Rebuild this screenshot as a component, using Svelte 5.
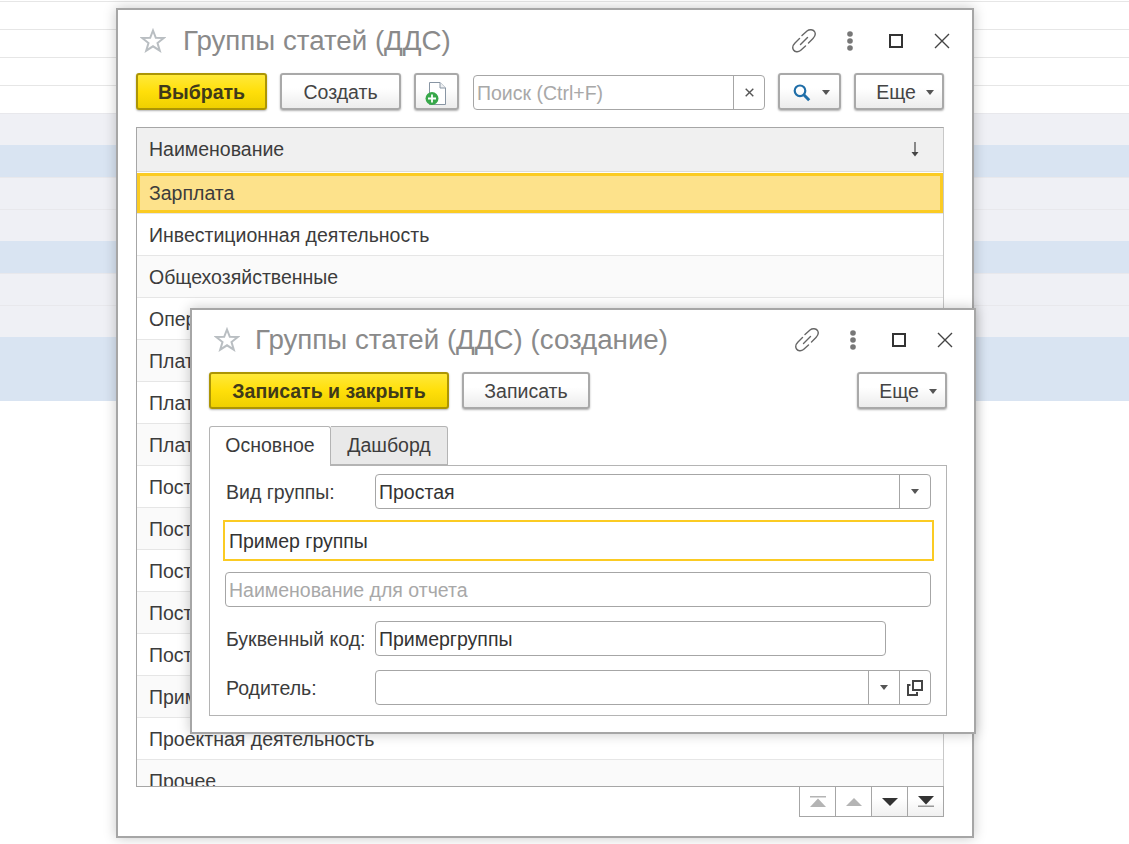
<script>
  const bgRows = [
    'plain','plain','plain','plain',
    'grey','blue','grey','grey','blue','grey','grey','blue','blue'
  ];
  const listRows = [
    'Зарплата','Инвестиционная деятельность','Общехозяйственные','Операционная деятельность',
    'Платежи поставщикам','Платежи бюджету','Платежи прочие','Поступления от клиентов',
    'Поступления прочие','Поступления кредитов','Поступления займов','Поступления процентов',
    'Пример группы','Проектная деятельность','Прочее'
  ];
</script>

{#snippet titleIcons()}
  <div class="title-icons">
    <span class="cell">
      <svg width="24" height="24" viewBox="0 0 24 24" fill="none" stroke="#666" stroke-width="1.4" stroke-linecap="round">
        <path d="M10 6.5 L15 2 C17.5 0 21 .5 22.5 2.5 C24 5 23 7.5 21 9.5 L16.5 14" />
        <path d="M13.5 17 L8.5 21.5 C6 23.5 3 23 1.5 21 C0 18.5 1 16 3 14 L7.5 9.5" />
        <path d="M8.5 15.5 L15.5 8.5" />
      </svg>
    </span>
    <span class="cell">
      <svg width="8" height="22" viewBox="0 0 8 22" fill="#777">
        <circle cx="4" cy="4" r="2.8" /><circle cx="4" cy="11" r="2.8" /><circle cx="4" cy="18" r="2.8" />
      </svg>
    </span>
    <span class="cell">
      <svg width="14" height="14" viewBox="0 0 14 14" fill="none" stroke="#333" stroke-width="2">
        <rect x="1" y="1" width="12" height="12" />
      </svg>
    </span>
    <span class="cell">
      <svg width="16" height="16" viewBox="0 0 16 16" fill="none" stroke="#444" stroke-width="1.4">
        <path d="M1 1 L15 15 M15 1 L1 15" />
      </svg>
    </span>
  </div>
{/snippet}

{#snippet star()}
  <svg class="star" width="26" height="25" viewBox="0 0 26 25" fill="#fff" stroke="#b9bec2" stroke-width="2" stroke-linejoin="miter">
    <path d="M13 2.5 L15.8 9.8 L23.8 10 L17.5 15 L19.8 22.7 L13 18.3 L6.2 22.7 L8.5 15 L2.2 10 L10.2 9.8 Z" />
  </svg>
{/snippet}

{#snippet caret()}
  <svg class="caret" width="8" height="5" viewBox="0 0 8 5" fill="#555"><path d="M0 0 H8 L4 5 Z" /></svg>
{/snippet}

<div class="desktop">
  <div class="bg">
    {#each bgRows as r}
      <div class="bg-row {r}"></div>
    {/each}
  </div>

  <section class="window main">
    <header class="titlebar">
      {@render star()}
      <h1>Группы статей (ДДС)</h1>
      {@render titleIcons()}
    </header>

    <div class="toolbar">
      <button class="btn primary w131">Выбрать</button>
      <button class="btn w121">Создать</button>
      <button class="btn w45">
        <svg width="26" height="24" viewBox="0 0 26 24">
          <path d="M5.5 1.5 H16 L21.5 7 V23.5 H5.5 Z" fill="#fff" stroke="#8895a3" stroke-width="1" />
          <path d="M16 1.5 V7 H21.5" fill="#eef0f2" stroke="#8895a3" stroke-width="1" />
          <circle cx="8" cy="17.5" r="6.5" fill="#37a84a" />
          <path d="M8 13.5 V21.5 M4 17.5 H12" stroke="#fff" stroke-width="1.8" />
        </svg>
      </button>
      <div class="search">
        <span class="search-text">Поиск (Ctrl+F)</span>
        <span class="search-x">
          <svg width="9" height="9" viewBox="0 0 9 9" fill="none" stroke="#555" stroke-width="1.4"><path d="M.7.7 L8.3 8.3 M8.3.7 L.7 8.3" /></svg>
        </span>
      </div>
      <button class="btn w63 find">
        <svg width="18" height="18" viewBox="0 0 18 18" fill="none" stroke="#1f6ea8">
          <circle cx="7" cy="6.8" r="5.3" stroke-width="2.2" />
          <path d="M10.8 10.8 L16.2 16.2" stroke-width="3" />
        </svg>
        {@render caret()}
      </button>
      <button class="btn w90 more">Еще {@render caret()}</button>
    </div>

    <div class="table">
      <div class="thead">
        <span>Наименование</span>
        <svg width="10" height="15" viewBox="0 0 10 15" fill="#444">
          <path d="M4.4 0 H5.6 V10 H4.4 Z" /><path d="M1.5 10 H8.5 L5 14.5 Z" />
        </svg>
      </div>
      {#each listRows as name, i}
        <div class="row" class:sel={i === 0} class:alt={i % 2 === 0 && i > 0}>{name}</div>
      {/each}
    </div>

    <div class="pager">
      <span class="pg off">
        <svg width="16" height="11" viewBox="0 0 16 11" fill="#b4b4b4"><path d="M0 0 H16 V1.5 H0 Z M8 2.5 L16 11 H0 Z" /></svg>
      </span>
      <span class="pg off">
        <svg width="16" height="8" viewBox="0 0 16 8" fill="#b4b4b4"><path d="M8 0 L16 8 H0 Z" /></svg>
      </span>
      <span class="pg">
        <svg width="16" height="8" viewBox="0 0 16 8" fill="#333"><path d="M0 0 H16 L8 8 Z" /></svg>
      </span>
      <span class="pg">
        <svg width="16" height="11" viewBox="0 0 16 11" fill="#333"><path d="M0 0 H16 L8 8.5 Z" /><path d="M0 9.5 H16 V11 H0 Z" fill="#999" /></svg>
      </span>
    </div>
  </section>

  <section class="window dialog">
    <header class="titlebar">
      {@render star()}
      <h1>Группы статей (ДДС) (создание)</h1>
      {@render titleIcons()}
    </header>

    <div class="toolbar">
      <button class="btn primary w240">Записать и закрыть</button>
      <button class="btn w128">Записать</button>
      <button class="btn w90 more push">Еще {@render caret()}</button>
    </div>

    <div class="tabs">
      <span class="tab active">Основное</span>
      <span class="tab">Дашборд</span>
    </div>

    <div class="panel">
      <div class="frow">
        <span class="label">Вид группы:</span>
        <div class="field grow">
          <span class="val">Простая</span>
          <span class="addon">{@render caret()}</span>
        </div>
      </div>

      <div class="focus">Пример группы</div>

      <div class="field placeholder"><span class="val">Наименование для отчета</span></div>

      <div class="frow gap14">
        <span class="label">Буквенный код:</span>
        <div class="field code"><span class="val">Примергруппы</span></div>
      </div>

      <div class="frow gap14">
        <span class="label">Родитель:</span>
        <div class="field grow">
          <span class="val"></span>
          <span class="addon">{@render caret()}</span>
          <span class="addon">
            <svg width="16" height="16" viewBox="0 0 16 16" fill="none" stroke="#444" stroke-width="2">
              <rect x="6" y="1" width="9" height="9" />
              <path d="M3.5 5 H1 V15 H10 V12" />
            </svg>
          </span>
        </div>
      </div>
    </div>
  </section>
</div>

<style>
  :global(body) {
    margin: 0;
    background: #fff;
  }

  .desktop {
    position: relative;
    width: 1129px;
    height: 844px;
    overflow: hidden;
    font-family: "Liberation Sans", Arial, sans-serif;
    font-size: 19.5px;
    color: #3c3c3c;
  }

  .bg {
    padding-top: 1px;
  }
  .bg-row {
    box-sizing: border-box;
  }
  .plain {
    height: 28px;
    border-top: 1px solid #e6e6e6;
  }
  .grey {
    height: 32px;
    background: #eff0f5;
    border-top: 1px solid #e8e8ec;
  }
  .blue {
    height: 32px;
    background: #d9e4f2;
  }

  .window {
    position: absolute;
    box-sizing: border-box;
    background: #fff;
    border: 2px solid #a6a6a6;
    box-shadow: 0 0 12px rgba(0, 0, 0, 0.22);
  }
  .main {
    left: 116px;
    top: 8px;
    width: 858px;
    height: 830px;
    padding: 0 28px 0 18px;
  }
  .dialog {
    left: 190px;
    top: 308px;
    width: 786px;
    height: 426px;
    padding: 0 27px 0 17px;
  }

  .titlebar {
    display: flex;
    box-sizing: border-box;
    align-items: center;
    height: 63px;
    padding-bottom: 2px;
    margin-right: -21px;
  }
  .dialog .titlebar {
    height: 62px;
    padding-bottom: 3px;
  }
  .star {
    margin-left: 4px;
    flex: none;
  }
  .dialog .star {
    margin-left: 5px;
  }
  h1 {
    margin: 0 0 0 17px;
    font-size: 27.7px;
    font-weight: 400;
    color: #8a8a8a;
    white-space: nowrap;
  }
  .dialog h1 {
    margin-left: 15px;
  }
  .title-icons {
    display: flex;
    margin-left: auto;
  }
  .cell {
    display: flex;
    width: 46px;
    justify-content: center;
    align-items: center;
  }

  .toolbar {
    display: flex;
    align-items: flex-start;
    gap: 13px;
    height: 38px;
    margin-bottom: 16px;
  }

  .btn {
    display: inline-flex;
    align-items: center;
    justify-content: center;
    box-sizing: border-box;
    height: 37px;
    padding: 2px 0 0;
    border: 2px solid #a9a9a9;
    border-radius: 3px;
    background: linear-gradient(#fff 40%, #ececec);
    box-shadow: 0 1px 2px rgba(0, 0, 0, 0.3);
    font: inherit;
    color: #444;
    flex: none;
  }
  .primary {
    border-color: #ac9505;
    background: linear-gradient(#ffe93a, #ffdf0a 50%, #efd000);
    font-weight: 700;
    color: #3f3a1a;
  }
  .w131 { width: 131px; }
  .w121 { width: 121px; }
  .w45 { width: 45px; }
  .w63 { width: 63px; }
  .w90 { width: 90px; }
  .w240 { width: 240px; }
  .w128 { width: 128px; }
  .find {
    gap: 11px;
    padding-left: 3px;
  }
  .more {
    gap: 10px;
    padding-left: 12px;
  }
  .push {
    margin-left: auto;
  }
  .caret {
    flex: none;
  }

  .search {
    display: flex;
    box-sizing: border-box;
    width: 292px;
    height: 35px;
    margin: 2px 0 0 1px;
    border: 1px solid #a6a6a6;
    border-radius: 4px;
    background: #fff;
    flex: none;
  }
  .search-text {
    flex: 1;
    padding-left: 3px;
    line-height: 34px;
    color: #a8a8a8;
  }
  .search-x {
    display: flex;
    width: 30px;
    justify-content: center;
    align-items: center;
    border-left: 1px solid #a6a6a6;
  }

  .table {
    box-sizing: border-box;
    height: 660px;
    overflow: hidden;
    border: 1px solid #a6a6a6;
    border-right-color: #c8c8c8;
  }
  .thead {
    display: flex;
    box-sizing: border-box;
    height: 44px;
    padding: 0 23px 0 12px;
    align-items: center;
    justify-content: space-between;
    background: #f0f0f0;
    border-bottom: 1px solid #dcdcdc;
  }
  .row {
    display: flex;
    box-sizing: border-box;
    height: 42px;
    padding: 1px 0 0 12px;
    align-items: center;
    border-bottom: 1px solid #e6e6e6;
    background: #fff;
    white-space: nowrap;
  }
  .alt {
    background: #fafafa;
  }
  .sel {
    padding-top: 0;
    border-top: 1px solid #fff;
    background: #fde28b;
    box-shadow: inset 0 0 0 3px #fbcb23;
    background-clip: padding-box;
  }

  .pager {
    display: flex;
    justify-content: flex-end;
    margin-top: -1px;
  }
  .pg {
    display: flex;
    box-sizing: border-box;
    width: 37px;
    height: 31px;
    margin-left: -1px;
    justify-content: center;
    align-items: center;
    border: 1px solid #a6a6a6;
    background: linear-gradient(#fff 40%, #f0f0f0);
  }
  .pg.off {
    background: #fff;
  }

  .tabs {
    display: flex;
    height: 39px;
    position: relative;
    z-index: 1;
  }
  .tab {
    display: flex;
    box-sizing: border-box;
    width: 117px;
    height: 39px;
    justify-content: center;
    align-items: center;
    border: 1px solid #b4b4b4;
    border-left-width: 0;
    border-radius: 0 3px 0 0;
    background: #e9e9e9;
  }
  .tab.active {
    width: 122px;
    height: 40px;
    padding-bottom: 2px;
    border-left-width: 1px;
    border-bottom: 0;
    border-radius: 3px 3px 0 0;
    background: #fff;
  }

  .panel {
    box-sizing: border-box;
    height: 251px;
    padding: 8px 15px 0;
    border: 1px solid #b4b4b4;
  }
  .frow {
    display: flex;
    align-items: center;
  }
  .gap14 {
    margin-top: 14px;
  }
  .label {
    box-sizing: border-box;
    width: 150px;
    padding: 1px 0 0 1px;
    flex: none;
    white-space: nowrap;
  }
  .field {
    display: flex;
    box-sizing: border-box;
    height: 35px;
    border: 1px solid #a6a6a6;
    border-radius: 4px;
    background: #fff;
    color: #333;
  }
  .grow {
    flex: 1;
  }
  .code {
    width: 511px;
  }
  .val {
    flex: 1;
    padding-left: 3px;
    line-height: 34px;
  }
  .addon {
    display: flex;
    width: 30px;
    justify-content: center;
    align-items: center;
    border-left: 1px solid #a6a6a6;
  }
  .focus {
    box-sizing: border-box;
    height: 41px;
    margin: 11px -3px 11px -2px;
    padding-left: 4px;
    border: 2px solid #fbcb23;
    line-height: 38px;
    color: #333;
  }
  .placeholder {
    color: #a8a8a8;
  }
</style>
